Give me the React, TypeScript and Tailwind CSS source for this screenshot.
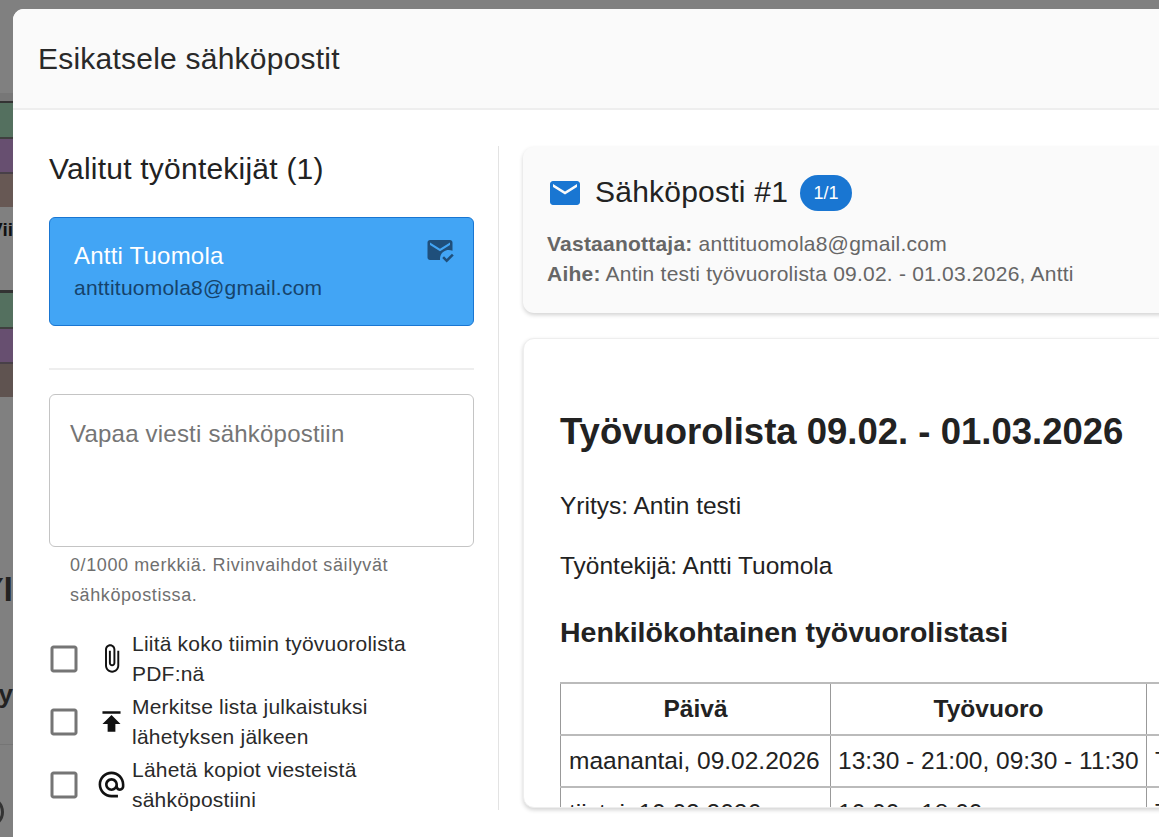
import type { ReactNode } from 'react';

function MuiIcon({ d, className }: { d: string; className: string }) {
  return (
    <svg viewBox="0 0 24 24" className={className} fill="currentColor" aria-hidden="true">
      <path d={d} />
    </svg>
  );
}

const ICONS = {
  box: 'M19 5v14H5V5h14m0-2H5c-1.1 0-2 .9-2 2v14c0 1.1.9 2 2 2h14c1.1 0 2-.9 2-2V5c0-1.1-.9-2-2-2z',
  clip: 'M16.5 6v11.5c0 2.21-1.79 4-4 4s-4-1.79-4-4V5c0-1.38 1.12-2.5 2.5-2.5s2.5 1.12 2.5 2.5v10.5c0 .55-.45 1-1 1s-1-.45-1-1V6H10v9.5c0 1.38 1.12 2.5 2.5 2.5s2.5-1.12 2.5-2.5V5c0-2.21-1.79-4-4-4S7 2.79 7 5v12.5c0 3.04 2.46 5.5 5.5 5.5s5.5-2.46 5.5-5.5V6h-1.5z',
  publish: 'M5 4v2h14V4H5zm0 10h4v6h6v-6h4l-7-7-7 7z',
  at: 'M12 2C6.48 2 2 6.48 2 12s4.48 10 10 10h5v-2h-5c-4.34 0-8-3.66-8-8s3.66-8 8-8 8 3.66 8 8v1.43c0 .79-.71 1.57-1.5 1.57s-1.5-.78-1.5-1.57V12c0-2.76-2.24-5-5-5s-5 2.24-5 5 2.24 5 5 5c1.38 0 2.64-.56 3.54-1.47.65.89 1.77 1.47 2.96 1.47 1.97 0 3.5-1.6 3.5-3.57V12c0-5.52-4.48-10-10-10zm0 13c-1.66 0-3-1.34-3-3s1.34-3 3-3 3 1.34 3 3-1.34 3-3 3z',
  email: 'M20 4H4c-1.1 0-1.99.9-1.99 2L2 18c0 1.1.9 2 2 2h16c1.1 0 2-.9 2-2V6c0-1.1-.9-2-2-2zm0 4l-8 5-8-5V6l8 5 8-5v2z',
  emailRead: 'M12 19c0-3.87 3.13-7 7-7 1.08 0 2.09.25 3 .68V6c0-1.1-.9-2-2-2H4c-1.1 0-2 .9-2 2v12c0 1.1.9 2 2 2h8.08c-.05-.33-.08-.66-.08-1zM4 6l8 5 8-5v2l-8 5-8-5V6zm13.34 16l-3.54-3.54 1.41-1.41 2.12 2.12 4.24-4.24L23 16.34 17.34 22z',
};

function OptionRow({ icon, children }: { icon: string; children: ReactNode }) {
  return (
    <label className="flex items-center h-[59px] mb-[4px]">
      <MuiIcon d={ICONS.box} className="w-[36px] h-[36px] ml-[-3px] text-[#757575] shrink-0" />
      <MuiIcon d={icon} className="w-[31px] h-[31px] ml-[14px] text-[#111] shrink-0" />
      <span className="ml-[5px] text-[21px] leading-[30px] tracking-[0.01em] text-[#2a2a2a]">{children}</span>
    </label>
  );
}

// the page behind the dialog, only a sliver of it shows
function BackdropStrip() {
  return (
    <div className="w-[13px] shrink-0 overflow-hidden flex flex-col">
      <div className="h-[93px] shrink-0" />
      <div className="h-[8px] shrink-0 bg-[#777777]" />
      <div className="h-[2px] shrink-0 bg-[#333]" />
      <div className="h-[34px] shrink-0 bg-[#54705f]" />
      <div className="h-[2px] shrink-0 bg-[#3f3f3f]" />
      <div className="h-[33px] shrink-0 bg-[#674f70]" />
      <div className="h-[2px] shrink-0 bg-[#484048]" />
      <div className="h-[33px] shrink-0 bg-[#675854]" />
      <div className="h-[83px] shrink-0 flex items-start justify-end">
        <span className="mt-[12px] text-[19px] leading-[22px] font-bold text-[#111] whitespace-nowrap">Vii</span>
      </div>
      <div className="h-[3px] shrink-0 bg-[#333]" />
      <div className="h-[34px] shrink-0 bg-[#54705f]" />
      <div className="h-[2px] shrink-0 bg-[#3f3f3f]" />
      <div className="h-[33px] shrink-0 bg-[#674f70]" />
      <div className="h-[2px] shrink-0 bg-[#484048]" />
      <div className="h-[33px] shrink-0 bg-[#5f5350]" />
      <div className="h-[212px] shrink-0 flex items-end justify-end">
        <span className="text-[34px] leading-[40px] font-bold text-[#222] whitespace-nowrap">Yl</span>
      </div>
      <div className="h-[101px] shrink-0 flex items-end justify-end">
        <span className="text-[26px] leading-[32px] font-bold text-[#222] whitespace-nowrap">ty</span>
      </div>
      <div className="h-[35px] shrink-0 border-b border-[#757575]" />
      <div className="h-[91px] shrink-0 relative">
        <div className="absolute left-[-28px] top-[51px] w-[32px] h-[32px] rounded-full border-[3px] border-[#333]" />
      </div>
    </div>
  );
}

export default function App() {
  return (
    <div className="h-[837px] w-[1159px] overflow-hidden flex bg-[#808080] font-['Liberation_Sans',sans-serif]">
      <BackdropStrip />

      {/* Dialog */}
      <div className="flex-1 min-w-0 mt-[9px] bg-white rounded-tl-[11px] overflow-hidden flex flex-col">
        <div className="h-[101px] shrink-0 bg-[#fafafa] border-b-2 border-[#eeeeee] pl-[25px] flex items-center">
          <h2 className="text-[30px] tracking-[0.0075em] text-[#292929]">Esikatsele sähköpostit</h2>
        </div>

        <div className="flex pt-[36px] pl-[36px]">
          {/* Left column */}
          <div className="w-[425px] shrink-0">
            <h3 className="text-[30px] leading-[46px] tracking-[0.0075em] text-[#222]">Valitut työntekijät (1)</h3>

            <div className="relative mt-[25px] h-[109px] rounded-[6px] bg-[#42a5f5] border border-[#1976d2] pl-[24px] pt-[21px]">
              <div className="text-[24px] leading-[34px] tracking-[0.009em] text-white">Antti Tuomola</div>
              <div className="text-[21px] leading-[30px] tracking-[0.0107em] text-[#16436b]">anttituomola8@gmail.com</div>
              <MuiIcon d={ICONS.emailRead} className="absolute right-[18px] top-[17px] w-[30px] h-[30px] text-[#1f4f7b]" />
            </div>

            <div className="mt-[42px] h-[2px] bg-[#eeeeee]" />

            <div className="mt-[24px] h-[153px] rounded-[6px] border border-[#c4c4c4] pl-[20px] pt-[22px] text-[24px] leading-[34px] tracking-[0.009em] text-[#757575]">
              Vapaa viesti sähköpostiin
            </div>
            <p className="mt-[4px] mx-[21px] text-[18px] leading-[29.5px] tracking-[0.033em] text-[#6f6f6f]">
              0/1000 merkkiä. Rivinvaihdot säilyvät sähköpostissa.
            </p>

            <div className="mt-[19px]">
              <OptionRow icon={ICONS.clip}>
                Liitä koko tiimin työvuorolista
                <br />
                PDF:nä
              </OptionRow>
              <OptionRow icon={ICONS.publish}>
                Merkitse lista julkaistuksi
                <br />
                lähetyksen jälkeen
              </OptionRow>
              <OptionRow icon={ICONS.at}>
                Lähetä kopiot viesteistä
                <br />
                sähköpostiini
              </OptionRow>
            </div>
          </div>

          {/* Divider */}
          <div className="ml-[24px] w-px h-[664px] bg-[#e3e3e3] shrink-0" />

          {/* Right column */}
          <div className="ml-[24px] w-[800px] shrink-0 pt-[1px]">
            <div className="h-[166px] rounded-[11px] bg-[#fafafa] shadow-[0_2px_4px_rgba(0,0,0,0.18)] pl-[24px] pt-[24px]">
              <div className="flex items-center h-[44px]">
                <MuiIcon d={ICONS.email} className="w-[36px] h-[36px] text-[#1976d2]" />
                <span className="ml-[12px] mt-[-3px] text-[30px] tracking-[0.0075em] text-[#222]">Sähköposti #1</span>
                <span className="ml-[12px] w-[52px] h-[36px] rounded-full bg-[#1976d2] text-white text-[18px] flex items-center justify-center">1/1</span>
              </div>
              <div className="mt-[14px] text-[21px] leading-[30px] tracking-[0.0107em] text-[#666]">
                <div>
                  <b>Vastaanottaja:</b> anttituomola8@gmail.com
                </div>
                <div>
                  <b>Aihe:</b> Antin testi työvuorolista 09.02. - 01.03.2026, Antti
                </div>
              </div>
            </div>

            <div className="mt-[25px] h-[470px] rounded-[11px] bg-white border border-[#eeeeee] shadow-[0_2px_4px_rgba(0,0,0,0.18)] overflow-hidden pl-[36px] text-[#222]">
              <h1 className="mt-[69px] text-[36.5px] leading-[48px] font-bold">Työvuorolista 09.02. - 01.03.2026</h1>
              <p className="mt-[32px] text-[24.5px] leading-[36px]">Yritys: Antin testi</p>
              <p className="mt-[24px] text-[24.5px] leading-[36px]">Työntekijä: Antti Tuomola</p>
              <h2 className="mt-[28px] text-[28.5px] leading-[40px] font-bold">Henkilökohtainen työvuorolistasi</h2>
              <table className="mt-[30px] w-[760px] table-fixed border-collapse text-[24.5px] leading-[36px]">
                <colgroup>
                  <col className="w-[270px]" />
                  <col className="w-[316px]" />
                  <col />
                </colgroup>
                <thead>
                  <tr className="h-[52px]">
                    <th className="border-y-2 border-y-[#bbbbbb] border-x border-x-[#999999] font-bold">Päivä</th>
                    <th className="border-y-2 border-y-[#bbbbbb] border-x border-x-[#999999] font-bold">Työvuoro</th>
                    <th className="border-y-2 border-y-[#bbbbbb] border-x border-x-[#999999] font-bold">Työpiste</th>
                  </tr>
                </thead>
                <tbody>
                  <tr className="h-[52px]">
                    <td className="border-y-2 border-y-[#bbbbbb] border-x border-x-[#999999] px-[8px] whitespace-nowrap">maanantai, 09.02.2026</td>
                    <td className="border-y-2 border-y-[#bbbbbb] border-x border-x-[#999999] px-[7px] whitespace-nowrap">13:30 - 21:00, 09:30 - 11:30</td>
                    <td className="border-y-2 border-y-[#bbbbbb] border-x border-x-[#999999] px-[8px]">Testi</td>
                  </tr>
                  <tr className="h-[52px]">
                    <td className="border-y-2 border-y-[#bbbbbb] border-x border-x-[#999999] px-[8px] whitespace-nowrap">tiistai, 10.02.2026</td>
                    <td className="border-y-2 border-y-[#bbbbbb] border-x border-x-[#999999] px-[7px] whitespace-nowrap">10:00 - 18:00</td>
                    <td className="border-y-2 border-y-[#bbbbbb] border-x border-x-[#999999] px-[8px]">Testi</td>
                  </tr>
                </tbody>
              </table>
            </div>
          </div>
        </div>
      </div>
    </div>
  );
}
